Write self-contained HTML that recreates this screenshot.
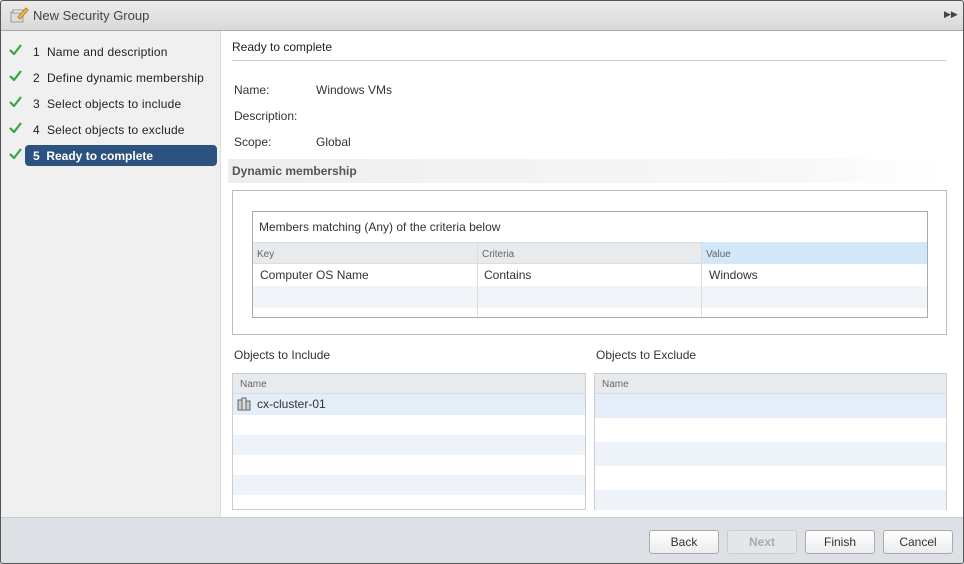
<!DOCTYPE html>
<html><head><style>
*{box-sizing:border-box;margin:0;padding:0}
body{width:964px;height:564px;font-family:"Liberation Sans",sans-serif;font-size:12px;color:#333;background:#fff;position:relative;overflow:hidden}
.win{position:absolute;left:0;top:0;width:964px;height:564px;overflow:hidden;background:#fff}
.frame{position:absolute;left:0;top:0;width:964px;height:564px;border:1px solid #555;border-radius:3px}
.title{position:absolute;left:0;top:0;width:964px;height:31px;background:linear-gradient(#ececec,#d9d9d9);border-bottom:1px solid #a9a9a9}
.title span{position:absolute;left:33px;top:8px;font-size:13px;color:#444}
.left{position:absolute;left:0;top:31px;width:221px;height:486px;background:#f0f0f0;border-right:1px solid #ddd}
.step{position:absolute;left:0;height:21px;width:221px;font-size:12px;color:#222;letter-spacing:0.2px}
.step .ck{position:absolute;left:9px;top:3px}
.step .t{position:absolute;left:33px;top:4px}
.step.sel .bg{position:absolute;left:25px;top:0;width:192px;height:21px;background:#2c527f;border-radius:4px}
.step.sel .t{color:#fff;font-weight:bold;letter-spacing:0}
.abs{position:absolute}
.footer{position:absolute;left:0;top:517px;width:964px;height:47px;background:#dde1e6;border-top:1px solid #c8ccd0}
.btn{position:absolute;top:12px;height:24px;width:70px;border:1px solid #aaa;border-radius:3px;background:linear-gradient(#fff,#ececec);text-align:center;line-height:22px;font-size:12px;color:#333}
.gl{position:absolute;background:#ccc}
</style></head><body><div class="win">
<div class="title">
<svg class="abs" style="left:9px;top:6px" width="20" height="18"><rect x="2" y="6" width="12" height="10" fill="#ddd" stroke="#999"/><rect x="4" y="4" width="10" height="3" fill="#eee" stroke="#999"/><path d="M9 11 L17 2 L19 4 L11 13 Z" fill="#f3c14b" stroke="#b58518"/></svg>
<span>New Security Group</span>
<span style="left:944px;top:9px;font-size:9px;color:#444">▶▶</span>
</div>
<div class="left">
<div class="step" style="top:10px"><svg class="ck" width="13" height="11"><path d="M1 6 L5 10 L12 1" stroke="#3aa63a" stroke-width="2.2" fill="none"/></svg><span class="t">1&nbsp; Name and description</span></div>
<div class="step" style="top:36px"><svg class="ck" width="13" height="11"><path d="M1 6 L5 10 L12 1" stroke="#3aa63a" stroke-width="2.2" fill="none"/></svg><span class="t">2&nbsp; Define dynamic membership</span></div>
<div class="step" style="top:62px"><svg class="ck" width="13" height="11"><path d="M1 6 L5 10 L12 1" stroke="#3aa63a" stroke-width="2.2" fill="none"/></svg><span class="t">3&nbsp; Select objects to include</span></div>
<div class="step" style="top:88px"><svg class="ck" width="13" height="11"><path d="M1 6 L5 10 L12 1" stroke="#3aa63a" stroke-width="2.2" fill="none"/></svg><span class="t">4&nbsp; Select objects to exclude</span></div>
<div class="step sel" style="top:114px"><div class="bg"></div><svg class="ck" width="13" height="11"><path d="M1 6 L5 10 L12 1" stroke="#3aa63a" stroke-width="2.2" fill="none"/></svg><span class="t">5&nbsp; Ready to complete</span></div>
</div>
<div class="abs" style="left:232px;top:40px;font-size:12px;color:#222">Ready to complete</div>
<div class="gl" style="left:232px;top:60px;width:714px;height:1px"></div>
<div class="abs" style="left:234px;top:83px">Name:</div><div class="abs" style="left:316px;top:83px">Windows VMs</div>
<div class="abs" style="left:234px;top:109px">Description:</div>
<div class="abs" style="left:234px;top:135px">Scope:</div><div class="abs" style="left:316px;top:135px">Global</div>
<div class="abs" style="left:228px;top:159px;width:718px;height:24px;background:linear-gradient(90deg,#eee,#f8f8f8 80%,#fff)"></div>
<div class="abs" style="left:232px;top:164px;font-weight:bold;color:#555">Dynamic membership</div>
<div class="abs" style="left:232px;top:190px;width:715px;height:145px;border:1px solid #bbb"></div>
<div class="abs" style="left:252px;top:211px;width:676px;height:107px;border:1px solid #aaa;background:#fff">
<div class="abs" style="left:6px;top:8px">Members matching (Any) of the criteria below</div>
<div class="abs" style="left:0;top:30px;width:674px;height:22px;background:#e8ebee;border-top:1px solid #ddd;border-bottom:1px solid #ddd"></div>
<div class="abs" style="left:449px;top:30px;width:225px;height:22px;background:#d2e8f8"></div>
<div class="abs" style="left:4px;top:37px;font-size:10px;color:#666">Key</div>
<div class="abs" style="left:229px;top:37px;font-size:10px;color:#666">Criteria</div>
<div class="abs" style="left:453px;top:37px;font-size:10px;color:#666">Value</div>
<div class="abs" style="left:0;top:74px;width:674px;height:22px;background:#f1f4f8"></div>
<div class="gl" style="left:224px;top:30px;width:1px;height:75px;background:#ddd"></div>
<div class="gl" style="left:448px;top:30px;width:1px;height:75px;background:#ddd"></div>
<div class="abs" style="left:7px;top:56px">Computer OS Name</div>
<div class="abs" style="left:231px;top:56px">Contains</div>
<div class="abs" style="left:456px;top:56px">Windows</div>
</div>
<div class="abs" style="left:234px;top:348px">Objects to Include</div>
<div class="abs" style="left:596px;top:348px">Objects to Exclude</div>
<div class="abs" style="left:232px;top:373px;width:354px;height:137px;border:1px solid #ccc;background:#fff">
<div class="abs" style="left:0;top:0;width:352px;height:20px;background:#e8ebee;border-bottom:1px solid #ddd"></div>
<div class="abs" style="left:7px;top:5px;font-size:10px;color:#666">Name</div>
<div class="abs" style="left:0;top:20px;width:352px;height:21px;background:#e4eef8"></div>
<div class="abs" style="left:0;top:61px;width:352px;height:20px;background:#eef3f9"></div>
<div class="abs" style="left:0;top:101px;width:352px;height:20px;background:#eef3f9"></div>
<svg class="abs" style="left:4px;top:23px" width="14" height="14"><rect x="1" y="3" width="4" height="10" fill="#ccc" stroke="#666"/><rect x="5" y="1" width="4" height="12" fill="#ddd" stroke="#666"/><rect x="9" y="4" width="4" height="9" fill="#ccc" stroke="#666"/></svg>
<div class="abs" style="left:24px;top:23px">cx-cluster-01</div>
</div>
<div class="abs" style="left:594px;top:373px;width:353px;height:137px;border:1px solid #ccc;background:#fff">
<div class="abs" style="left:0;top:0;width:351px;height:20px;background:#e8ebee;border-bottom:1px solid #ddd"></div>
<div class="abs" style="left:7px;top:5px;font-size:10px;color:#666">Name</div>
<div class="abs" style="left:0;top:20px;width:351px;height:24px;background:#e4eef8"></div>
<div class="abs" style="left:0;top:68px;width:351px;height:24px;background:#eef3f9"></div>
<div class="abs" style="left:0;top:116px;width:351px;height:20px;background:#eef3f9"></div>
</div>
<div class="footer">
<div class="btn" style="left:649px">Back</div>
<div class="btn" style="left:727px;color:#aaa;font-weight:bold;border-color:#ccc;background:#e4e7ea">Next</div>
<div class="btn" style="left:805px">Finish</div>
<div class="btn" style="left:883px">Cancel</div>
</div>
<div class="frame"></div>
</div></body></html>
